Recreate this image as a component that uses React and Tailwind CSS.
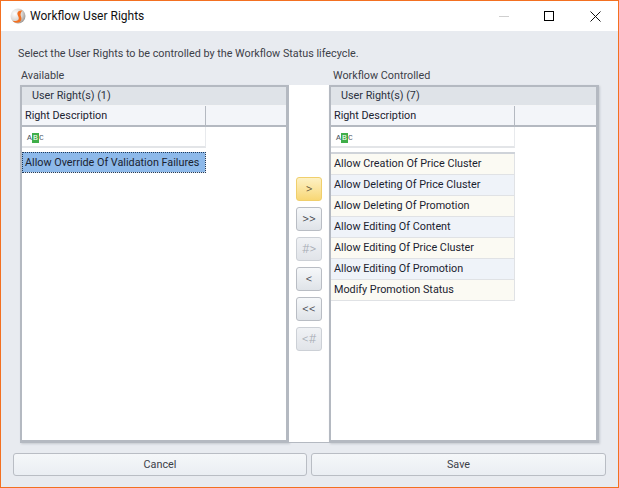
const AVAILABLE = ["Allow Override Of Validation Failures"];

const CONTROLLED = [
  "Allow Creation Of Price Cluster",
  "Allow Deleting Of Price Cluster",
  "Allow Deleting Of Promotion",
  "Allow Editing Of Content",
  "Allow Editing Of Price Cluster",
  "Allow Editing Of Promotion",
  "Modify Promotion Status",
];

const MOVE_BUTTONS = [
  { label: ">", hot: true },
  { label: ">>" },
  { label: "#>", disabled: true },
  { label: "<" },
  { label: "<<" },
  { label: "<#", disabled: true },
];

const Logo = () => (
  <svg width="16" height="16" viewBox="0 0 16 16" className="shrink-0">
    <defs>
      <radialGradient id="ball" cx="0.3" cy="0.35" r="0.8">
        <stop offset="0" stopColor="#ffffff" />
        <stop offset="0.6" stopColor="#d8d4d0" />
        <stop offset="1" stopColor="#8f8a86" />
      </radialGradient>
    </defs>
    <circle cx="8" cy="8" r="7.5" fill="url(#ball)" />
    <path d="M12.5 2.5C8.5 2.5 7 4 7.5 6.5C8 8.5 9.5 9.5 8.5 11.5C7.5 13 5 13.5 2.5 12.5C4.5 15.5 9.5 15.5 11 12.5C12.3 10 10.5 8 10.5 6.5C10.5 5 11.5 3.5 12.5 2.5Z" fill="#f37021" />
  </svg>
);

const AbcIcon = () => (
  <span className="flex items-center font-['Liberation_Mono',monospace] text-[8px] leading-[10px] text-[#4b5563]">
    <span className="w-[5px] text-center">A</span>
    <span className="w-[7px] h-[10px] bg-[#3fae49] text-center text-white">B</span>
    <span className="w-[5px] text-center">C</span>
  </span>
);

const GridPanel = ({ count, rows, selected, striped, className }) => (
  <div className={`flex flex-col shrink-0 bg-white border-2 border-[#b4b9c1] border-b-[3px] border-r-[3px] shadow-[1px_1px_2px_#c5c9cf] ${className}`}>
    <div className="h-[19px] shrink-0 bg-[#dfe3e8] pl-[10px] text-[#2b3240] flex items-center border-b border-[#f4f5f7]">
      User Right(s) ({count})
    </div>
    <div className="h-[21px] shrink-0 flex bg-[#f3f5f9] border-b-2 border-[#b4b9c1]">
      <div className="w-[184px] pl-[3px] pt-[2px] flex items-center border-r border-[#b4b9c1]">
        Right Description
      </div>
    </div>
    <div className="w-[184px] h-[21px] shrink-0 pl-[5px] pt-[2px] flex items-center border-b-2 border-[#e3e5e8] border-r border-r-[#e8eaed]">
      <AbcIcon />
    </div>
    <div className={`mt-[4px] w-[184px] flex flex-col ${striped ? "border-t-2 border-[#cfd3d9]" : ""}`}>
      {rows.map((row, i) => (
        <div
          key={row}
          className={`h-[21px] pl-[3px] flex items-center whitespace-nowrap border-b border-r border-[#e0e2e5] ${
            selected
              ? "pt-[2px] bg-[#8db9ea] outline-1 outline-dotted -outline-offset-1 outline-[#1f3b5c]"
              : i % 2 === 0
                ? "bg-[#fbfaf3]"
                : "bg-[#eff3f9]"
          }`}
        >
          {row}
        </div>
      ))}
    </div>
  </div>
);

const MoveButton = ({ label, hot, disabled }) => (
  <button
    type="button"
    className={`w-[26px] h-[24px] rounded-[3px] border flex items-center justify-center text-[13px] font-light ${
      hot
        ? "border-[#f0cf6c] bg-gradient-to-b from-[#fdf1c4] to-[#f8d774] text-[#5c5236]"
        : disabled
          ? "border-[#ccd0d6] bg-gradient-to-b from-[#f0f2f5] to-[#e1e4e9] text-[#a6abb3]"
          : "border-[#b9bdc4] bg-gradient-to-b from-[#f6f8fa] to-[#dfe3e8] text-[#3c4048]"
    }`}
  >
    {label}
  </button>
);

const FooterButton = ({ children, className }) => (
  <button
    type="button"
    className={`h-[23px] pt-px rounded-[3px] border border-[#b9bdc4] bg-gradient-to-b from-[#f5f7f9] to-[#eaeef3] text-[#3c4048] ${className}`}
  >
    {children}
  </button>
);

export default function App() {
  return (
    <div className="w-[619px] h-[488px] flex flex-col border border-[#f37021] bg-[#e8ebf0] font-['Roboto',sans-serif] text-[10.8px] text-[#1a2230] overflow-hidden">
      {/* Title bar */}
      <div className="h-[30px] shrink-0 bg-white flex items-center pl-[9px] text-[#111]">
        <Logo />
        <span className="ml-[4px] text-[12px]">Workflow User Rights</span>
        <div className="ml-auto flex items-center">
          <span className="w-[45px] flex justify-center">
            <span className="block w-[10px] h-px bg-[#cfcfcf]" />
          </span>
          <span className="w-[46px] flex justify-center">
            <span className="block w-[10px] h-[10px] border border-black" />
          </span>
          <span className="w-[46px] flex justify-center">
            <svg width="11" height="11" viewBox="0 0 11 11">
              <path d="M0.5 0.5L10.5 10.5M10.5 0.5L0.5 10.5" stroke="#111" strokeWidth="1" fill="none" />
            </svg>
          </span>
        </div>
      </div>

      <div className="flex-1 flex flex-col pl-[12px] pr-[12px]">
        <p className="mt-[15px] ml-[5px] h-[16px] leading-[16px] text-[#3c4048]">
          Select the User Rights to be controlled by the Workflow Status lifecycle.
        </p>
        <div className="mt-[6px] h-[16px] leading-[16px] flex text-[#3c4048]">
          <span className="ml-[8px] w-[312px]">Available</span>
          <span>Workflow Controlled</span>
        </div>

        {/* Lists with move buttons between them */}
        <div className="mt-[1px] ml-[7px] h-[358px] flex shrink-0">
          <GridPanel count={AVAILABLE.length} rows={AVAILABLE} selected className="w-[269px]" />
          <div className="w-[40px] shrink-0 bg-white border-b border-[#b4b9c1] flex flex-col items-start gap-[6px] pl-[7px] pt-[92px]">
            {MOVE_BUTTONS.map((b) => (
              <MoveButton key={b.label} {...b} />
            ))}
          </div>
          <GridPanel count={CONTROLLED.length} rows={CONTROLLED} striped className="w-[270px]" />
        </div>

        <div className="mt-[10px] flex gap-[4px]">
          <FooterButton className="w-[294px]">Cancel</FooterButton>
          <FooterButton className="w-[295px]">Save</FooterButton>
        </div>
      </div>
    </div>
  );
}
